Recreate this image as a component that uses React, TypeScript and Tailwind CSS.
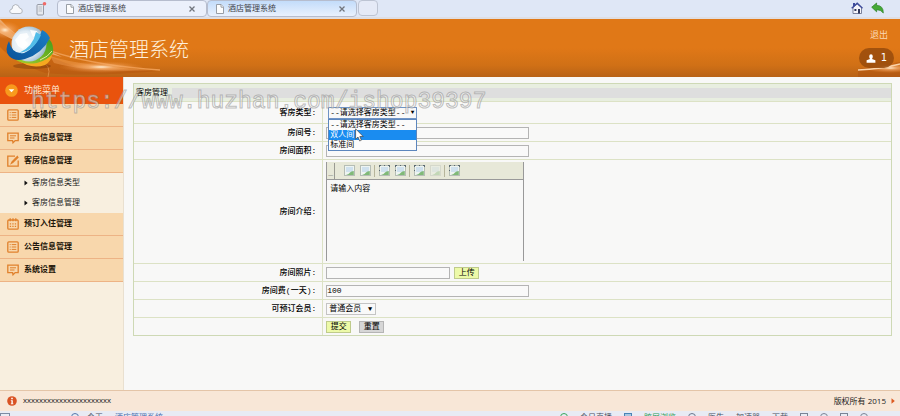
import { useState, type ReactNode } from "react";

type IconName = "list" | "chat" | "edit" | "calendar";

const menu: { label: string; icon: IconName; children?: string[] }[] = [
  { label: "基本操作", icon: "list" },
  { label: "会员信息管理", icon: "chat" },
  { label: "客房信息管理", icon: "edit", children: ["客房信息类型", "客房信息管理"] },
  { label: "预订入住管理", icon: "calendar" },
  { label: "公告信息管理", icon: "list" },
  { label: "系统设置", icon: "chat" },
];

const roomTypes = ["--请选择客房类型--", "双人间", "标准间"];

const toolbar = [
  { name: "粗体" },
  { name: "斜体", divider: true },
  { name: "左对齐", dots: true },
  { name: "右对齐", dots: true, divider: true },
  { name: "链接", dots: true },
  { name: "取消链接", faded: true, divider: true },
  { name: "图片", dots: true },
];

const MenuIcon = ({ name }: { name: IconName }) => (
  <svg viewBox="0 0 12 12" className="h-3 w-3 flex-shrink-0" fill="none" stroke="#e0812c" strokeWidth="1.3">
    {name === "list" && (
      <>
        <rect x="0.8" y="0.8" width="10.4" height="10.4" rx="1" />
        <path d="M2.7 3.6h1M4.7 3.6h4.6M2.7 6h1M4.7 6h4.6M2.7 8.4h1M4.7 8.4h4.6" strokeWidth="1" />
      </>
    )}
    {name === "chat" && (
      <>
        <path d="M0.8 1.2h10.4v7.4H8.2L6 10.8 5.6 8.6H0.8z" />
        <path d="M3 3.8h6M3 6h4.5" strokeWidth="1" />
      </>
    )}
    {name === "edit" && (
      <>
        <path d="M8 1.2H0.8v10h10.4V5.4" />
        <path d="M10.8 1L5 6.8 4.2 8.4 5.8 7.6 11.4 2" strokeWidth="1.1" />
      </>
    )}
    {name === "calendar" && (
      <>
        <rect x="0.8" y="2" width="10.4" height="9.2" rx="1" />
        <path d="M3.2 0.3v3M6 0.3v3M8.8 0.3v3" />
        <path d="M2.8 5.8h1.3M5.3 5.8h1.3M7.8 5.8h1.3M2.8 8.4h1.3M5.3 8.4h1.3M7.8 8.4h1.3" />
      </>
    )}
  </svg>
);

const PageIcon = () => (
  <svg viewBox="0 0 8 10" className="h-[10px] w-2 flex-shrink-0" fill="#fdfdfd" stroke="#8e949c" strokeWidth="0.9">
    <path d="M0.5 0.5h4.6l2.4 2.6v6.4h-7z" />
    <path d="M5 0.5v2.7h2.5" />
  </svg>
);

const Logo = () => (
  <svg viewBox="0 0 48 44" className="h-11 w-12 flex-shrink-0">
    <defs>
      <radialGradient id="globe" cx="0.4" cy="0.5" r="0.6">
        <stop offset="0" stopColor="#ffffff" />
        <stop offset="0.6" stopColor="#e2edf5" />
        <stop offset="1" stopColor="#93b3c8" />
      </radialGradient>
      <linearGradient id="wave" x1="0" y1="1" x2="1" y2="0">
        <stop offset="0" stopColor="#0a5299" />
        <stop offset="1" stopColor="#1c80c6" />
      </linearGradient>
      <linearGradient id="leaf" x1="0" y1="1" x2="1" y2="0">
        <stop offset="0" stopColor="#a4cc2c" />
        <stop offset="1" stopColor="#429e1c" />
      </linearGradient>
    </defs>
    <ellipse cx="26" cy="40" rx="19" ry="3" fill="#6d3208" opacity="0.4" />
    <path d="M10 33Q28 36 46 27Q46 35 39 39Q25 44 10 33z" fill="#f6a81f" />
    <path d="M10 34Q32 31 43 13Q48 18 47 27Q42 34 31 37Q18 39 10 34z" fill="url(#leaf)" />
    <circle cx="23" cy="18" r="17.5" fill="url(#globe)" />
    <path d="M9 14L14 8 21 7 23 11 19 14 22 18 17 23 12 20zM24 4L31 5 32 9 27 11z" fill="#fff" opacity="0.85" />
    <path d="M3 15Q-2 24 3 30Q9 36 19 33Q36 28 44 12Q41 6 36 4Q30 22 18 27Q6 29 3 15z" fill="url(#wave)" />
    <path d="M30 6Q27 21 13 27Q28 25 35 9z" fill="#52bce8" />
    <path d="M34 34Q42 31 46 25" stroke="#fff4c7" strokeWidth="0.8" fill="none" />
  </svg>
);

const Field = ({ label, id, tall, children }: { label?: string; id?: string; tall?: boolean; children: ReactNode }) => (
  <div className="flex border-t border-[#dce2c5]">
    <div className="flex w-1/4 items-center justify-end border-r border-[#dce2c5] pr-[6px] font-medium">
      {label && <label htmlFor={id}>{label}</label>}
    </div>
    <div className={`flex flex-1 items-center pl-[3px] ${tall ? "pt-[2px] pb-[2px]" : "h-[17px]"}`}>{children}</div>
  </div>
);

const Swoosh = () => (
  <svg viewBox="0 0 180 58" className="absolute top-0 left-0 h-full w-[180px]" preserveAspectRatio="none">
    <defs>
      <radialGradient id="flare">
        <stop offset="0" stopColor="#fff1d8" />
        <stop offset="0.3" stopColor="#f9b577" stopOpacity="0.7" />
        <stop offset="1" stopColor="#ef8c3a" stopOpacity="0" />
      </radialGradient>
    </defs>
    <path d="M0 0Q24 32 78 48L160 52Q90 58 45 54Q12 42 0 28z" fill="#b4520e" opacity="0.45" />
    <path d="M0 0Q12 14 28 22L62 38Q28 30 0 14z" fill="#f5bf8a" opacity="0.75" />
    <path d="M0 4Q42 43 160 51" fill="none" stroke="#ed9b50" strokeWidth="1.5" />
    <path d="M50 37Q80 47 155 51Q90 54 54 44z" fill="#f7a860" opacity="0.4" />
    <ellipse cx="101" cy="48" rx="42" ry="6" fill="url(#flare)" />
    <ellipse cx="5" cy="11" rx="16" ry="9" fill="url(#flare)" />
    <path d="M48 58Q52 46 40 42" fill="none" stroke="#e89a53" opacity="0.7" />
  </svg>
);

const BrowserTabs = () => (
  <div className="flex h-[19px] items-start border-b-2 border-[#dfdee2] bg-[#dfe7f6] text-[#3f4248]">
    <div className="flex w-[57px] items-center gap-[13px] pt-[2px] pl-[9px]">
      <svg viewBox="0 0 14 12" className="h-3 w-[14px]" fill="#f8f9fb" stroke="#b0b5bd">
        <path d="M3 10.5Q0.5 10 0.7 8Q1 6.2 3 6Q3 2 6.5 1.5Q10 1.8 10.5 5Q13.3 5.5 13.3 8Q13.3 10.5 11 10.5z" />
      </svg>
      <svg viewBox="0 0 11 14" className="h-[14px] w-[11px]">
        <rect x="1" y="2.5" width="6.5" height="10.5" rx="1" fill="#e6e9ee" stroke="#969ba6" />
        <path d="M2.5 5h3.5M2.5 7h3.5M2.5 9h3.5" stroke="#b9bec6" />
        <circle cx="8.5" cy="1.8" r="1.8" fill="#f06a67" />
      </svg>
    </div>
    {[false, true].map((active) => (
      <div
        key={String(active)}
        className={`flex h-[17px] w-[150px] items-center gap-1 rounded-sm border border-[#b6bdce] px-2 ${active ? "bg-gradient-to-b from-[#c3dcfa] to-[#e9f1fd]" : "bg-[#ebf0fb]"}`}
      >
        <PageIcon />
        <span className="flex-1">酒店管理系统</span>
        <button aria-label="关闭" className="flex h-3 w-3 items-center justify-center">
          <svg viewBox="0 0 6 6" className="h-[6px] w-[6px]" stroke="#72767d" strokeWidth="1.3">
            <path d="M0.5 0.5l5 5M5.5 0.5l-5 5" />
          </svg>
        </button>
      </div>
    ))}
    <button aria-label="新标签" className="ml-px h-4 w-5 rounded-sm border border-[#bdc4d3] bg-[#e5eaf7]" />
    <div className="ml-auto flex gap-2 pt-[2px] pr-4">
      <button aria-label="主页">
        <svg viewBox="0 0 12 12" className="h-3 w-3">
          <path d="M2 5.5v6h8.5v-6L6.2 2z" fill="#f5f5fa" stroke="#5e6684" strokeWidth="0.8" />
          <path d="M0.7 6.2L6.2 1.2 11.5 6.2" fill="none" stroke="#3d4b9b" strokeWidth="1.4" />
          <path d="M2 1h2v3H2z" fill="#3d4b9b" />
          <path d="M3.4 7h2v2h-2zM7 7h2v4.5H7z" fill="#30375c" />
        </svg>
      </button>
      <button aria-label="返回">
        <svg viewBox="0 0 13 12" className="h-3 w-[13px]">
          <path d="M0.7 5.2L5.6 1v2.4Q12.3 3.3 12.3 11Q10 7.7 5.6 7.7v2.1z" fill="#45a936" stroke="#27801f" strokeWidth="0.7" />
        </svg>
      </button>
    </div>
  </div>
);

const Header = () => (
  <header className="relative flex h-[58px] items-center justify-between bg-gradient-to-b from-[#e07817] from-50% via-[#d07016] via-80% to-[#b86216] pl-[6px]">
    <Swoosh />
    <svg viewBox="0 0 42 58" className="absolute right-0 h-full w-[42px]">
      <path d="M0 58V50L42 43v15z" fill="#a54b0d" opacity="0.35" />
      <ellipse cx="32" cy="49" rx="26" ry="5" fill="url(#flare)" />
      <path d="M0 51Q24 50 42 45" fill="none" stroke="#fbd4a9" strokeWidth="1.3" />
    </svg>
    <div className="relative flex items-center gap-[15px]">
      <Logo />
      <h1 className="pt-2 text-[20px] leading-6 font-light text-[#fff0dc]">酒店管理系统</h1>
    </div>
    <div className="relative flex flex-col items-end gap-1 pr-[6px]">
      <a href="#logout" className="mr-[6px] text-[9px] leading-4 text-[#fbd9b4]">
        退出
      </a>
      <div className="flex h-5 w-[35px] items-center justify-center gap-[5px] rounded-full bg-[#984b0c]/85 text-white">
        <svg viewBox="0 0 10 9" className="h-[9px] w-[10px]" fill="#fff">
          <path d="M3.2 2.2Q3.3 0.3 5 0.3T6.8 2.2Q6.8 4 6 5L9.4 6.3V8.8H0.6V6.3L4 5Q3.2 4 3.2 2.2z" />
        </svg>
        <span className="font-['DejaVu_Sans'] text-[10px]">1</span>
      </div>
    </div>
  </header>
);

const Sidebar = () => (
  <nav className="w-[124px] flex-shrink-0 border-r border-[#e9e0d0] bg-[#f8efdf]">
    <div className="flex h-[27px] items-center gap-[6px] bg-[#e9530d] pl-[5px] text-[9px] text-[#ffe7d2]">
      <svg viewBox="0 0 13 13" className="h-[13px] w-[13px]">
        <circle cx="6.5" cy="6.5" r="6.3" fill="#f89a1d" />
        <path d="M3.7 5.2h5.6L6.5 8.2z" fill="#fff" />
      </svg>
      功能菜单
    </div>
    {menu.map((item) => (
      <div key={item.label}>
        <button className="flex h-[23px] w-full items-center gap-[5px] border-b border-[#edb385] bg-[#f8d7ac] pl-[7px] font-bold text-[#1c1408]">
          <MenuIcon name={item.icon} />
          {item.label}
        </button>
        {item.children?.map((child) => (
          <a key={child} href="#room" className="flex h-5 items-center gap-1 pl-6 text-[#222]">
            <svg viewBox="0 0 4 6" className="h-[6px] w-1" fill="#111">
              <path d="M0.5 0.5L3.7 3 0.5 5.5z" />
            </svg>
            {child}
          </a>
        ))}
      </div>
    ))}
  </nav>
);

const Editor = () => (
  <div className="w-[198px] border-x border-[#999]">
    <div className="flex h-[18px] items-center border-b border-[#999] bg-[#e7e8d8]">
      <span className="flex h-4 w-2 items-end justify-center border-r border-[#9a9a92] text-[#666]">_</span>
      <div className="flex items-center pl-[6px]">
        {toolbar.map((t) => (
          <div key={t.name} className="flex items-center">
            <button aria-label={t.name} className={`flex w-4 justify-center ${t.faded ? "opacity-35" : ""}`}>
              <svg viewBox="0 0 11 11" className="h-[11px] w-[11px]">
                <rect x="0.5" y="0.5" width="10" height="10" fill="#eef4f1" stroke="#b5bdb5" />
                <path d="M2 2h7v5H2z" fill="#cfe1ee" />
                <path d="M2 10Q5 9 6 7.5T9.8 6v4z" fill="#80b978" />
                {t.dots && <path d="M0.5 0v2M10.5 0v2M0 0.5h2M9 0.5h2M5 0.5h1M0.5 5v1" stroke="#5b6a72" />}
              </svg>
            </button>
            {t.divider && <span className="mx-[1px] h-3 w-px bg-[#b6b59b]" />}
          </div>
        ))}
      </div>
    </div>
    <textarea
      id="intro"
      defaultValue="请输入内容"
      className="block h-[81px] w-full resize-none px-[3px] py-1 leading-[10px] outline-none"
    />
  </div>
);

const inputCls = "h-3 border border-[#b4b4b4] bg-[#f9f9f9] outline-none";
const btnCls = "h-3 w-[25px] border text-center leading-[10px]";

const RoomForm = () => {
  const [type, setType] = useState(roomTypes[0]);
  return (
    <form className="border border-[#ced9b5] bg-[#f8f8f7] text-black" onSubmit={(e) => e.preventDefault()}>
      <div className="flex h-[17px] items-center bg-[#e8eee0]">
        <h2 className="w-[38px] pl-[2px] whitespace-nowrap">客房管理</h2>
        <div className="h-[10px] flex-1 bg-[#dedede]" />
      </div>
      <div className="[&>div>div]:min-h-[21px]">
        <Field label="客房类型:" id="type">
          <div className="relative">
            <select
              id="type"
              value={type}
              onChange={(e) => setType(e.target.value)}
              className="ml-[2px] block h-3 w-[89px] appearance-none border border-[#6f93c5] bg-[#f8f8f8] pl-px leading-[10px] outline-none"
            >
              {roomTypes.map((r) => (
                <option key={r}>{r}</option>
              ))}
            </select>
            <span className="pointer-events-none absolute top-0 right-[3px] text-[6px] leading-3">▼</span>
            <ul className="absolute top-3 left-[2px] z-10 w-[89px] border border-[#5c86bd] bg-[#fbfbfb]">
              {roomTypes.map((r) => (
                <li
                  key={r}
                  onClick={() => setType(r)}
                  className={`h-[10px] pl-px leading-[10px] whitespace-nowrap ${r === "双人间" ? "bg-[#1a8cf0] text-white" : ""}`}
                >
                  {r}
                </li>
              ))}
            </ul>
            <svg viewBox="0 0 9 14" className="absolute top-[21px] left-[29px] z-20 h-[14px] w-[9px]">
              <path d="M0.6 0.8v10.4L3 9l1.7 4 1.7-0.8L4.8 8.5H8.2z" fill="#fff" stroke="#444" strokeWidth="0.7" />
            </svg>
          </div>
        </Field>
      </div>
      <Field label="房间号:" id="no">
        <input id="no" className={`${inputCls} w-[203px]`} />
      </Field>
      <Field label="房间面积:" id="area">
        <input id="area" className={`${inputCls} w-[203px]`} />
      </Field>
      <Field label="房间介绍:" id="intro" tall>
        <Editor />
      </Field>
      <Field label="房间照片:" id="photo">
        <input id="photo" className={`${inputCls} mr-1 w-[124px]`} />
        <button type="button" className={`${btnCls} border-[#bfcb8c] bg-[#edfaa8]`}>上传</button>
      </Field>
      <Field label="房间费(一天):" id="fee">
        <input id="fee" defaultValue="100" className={`${inputCls} w-[203px]`} />
      </Field>
      <Field label="可预订会员:" id="member">
        <div className="relative">
          <select id="member" className="block h-3 w-[50px] appearance-none border border-[#c4c4c4] bg-[#f9f9f9] pl-[2px] leading-[10px] outline-none">
            <option>普通会员</option>
          </select>
          <span className="pointer-events-none absolute top-0 right-1 text-[7px] leading-3">▼</span>
        </div>
      </Field>
      <Field>
        <button type="submit" className={`${btnCls} mr-2 border-[#bfcb8c] bg-[#edfaa8]`}>提交</button>
        <button type="reset" className={`${btnCls} border-[#b5b5b5] bg-[#d6d6d6]`}>重置</button>
      </Field>
    </form>
  );
};

const Footer = () => (
  <footer className="flex h-[21px] items-center border-t border-[#e4c5a8] bg-[#f8e7d7] pl-[7px] pr-[5px] text-[#222]">
    <svg viewBox="0 0 10 10" className="mr-[6px] h-[10px] w-[10px]">
      <circle cx="5" cy="5" r="4.8" fill="#d95223" />
      <path d="M4.2 1.8h1.6v1.5H4.2zM3.8 4.2h2V7.5h.6v.8H3.8v-.8h.6V5h-.6z" fill="#fff" />
    </svg>
    <span className="font-['Liberation_Sans'] text-[8px]">xxxxxxxxxxxxxxxxxxxxxx</span>
    <span className="ml-auto font-['Open_Sans','Noto_Sans_CJK_SC',sans-serif] text-[8px]">版权所有 2015</span>
    <svg viewBox="0 0 4 6" className="ml-[5px] h-[6px] w-1" fill="#dc5a20">
      <path d="M0.5 0.3L3.8 3 0.5 5.7z" />
    </svg>
  </footer>
);

// Only the top edge of the browser's status bar is visible
const StatusBar = () => (
  <div className="flex h-[5px] items-start justify-between overflow-hidden bg-[#e8ebf4] pt-[2px] pr-8 leading-[9px] text-[#4a5263]">
    <div className="flex gap-2">
      <span className="h-2 w-[10px] border border-[#7d8ba3]" />
      <span className="ml-[53px] h-2 w-2 rounded-full border border-[#5478ac]" />
      <span>今天</span>
      <span className="ml-1 text-[#496fae]">酒店管理系统</span>
    </div>
    <div className="flex gap-3">
      <span className="h-2 w-2 rounded-full border border-[#38a85b]" />
      <span>今日直播</span>
      <span className="h-2 w-2 border border-[#4a83b5] bg-[#a9c7e2]" />
      <span className="text-[#2e9d59]">跨屏浏览</span>
      <span className="h-2 w-2 rounded-full border border-[#68768e]" />
      <span>医生</span>
      <span>加速器</span>
      <span>下载</span>
      <span className="h-2 w-2 border border-[#7a8496]" />
      <span className="h-2 w-2 rounded-full border border-[#7a8496]" />
      <span className="h-2 w-2 border border-[#7a8496]" />
      <span className="h-2 w-2 rounded-full border border-[#7a8496]" />
    </div>
  </div>
);

export default function App() {
  return (
    <div className="relative flex min-h-screen flex-col bg-[#f8f8f7] font-['Liberation_Mono','Noto_Sans_CJK_SC',monospace] text-[8px] leading-3">
      <BrowserTabs />
      <Header />
      <div className="flex flex-1">
        <Sidebar />
        <main className="flex-1 pt-[6px] pr-2 pl-[9px]">
          <RoomForm />
        </main>
      </div>
      <Footer />
      <StatusBar />
      <div className="pointer-events-none absolute top-[88px] left-[31px] z-30 text-[23px] leading-7 text-white/50 [-webkit-text-stroke:1px_rgba(135,135,135,0.55)]">
        https://www.huzhan.com/ishop39397
      </div>
    </div>
  );
}
